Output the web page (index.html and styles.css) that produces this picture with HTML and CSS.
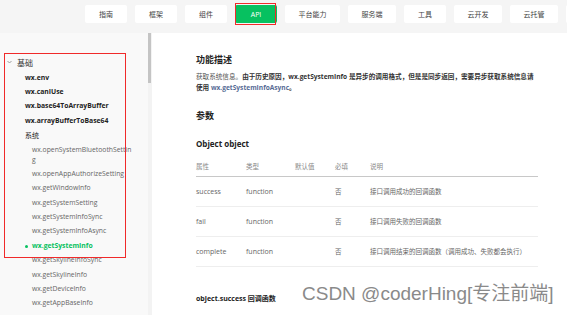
FILE: index.html
```html
<!DOCTYPE html>
<html lang="zh-CN">
<head>
<meta charset="utf-8">
<link rel="stylesheet" href="styles.css">
</head>
<body>
<header class="topbar">
  <nav class="tabs">
    <a class="tab">指南</a>
    <a class="tab">框架</a>
    <a class="tab">组件</a>
    <a class="tab tab-active">API</a>
    <a class="tab">平台能力</a>
    <a class="tab">服务端</a>
    <a class="tab">工具</a>
    <a class="tab">云开发</a>
    <a class="tab">云托管</a>
    <span class="tab tab-more"></span>
  </nav>
</header>
<div class="page">
  <aside class="sidebar">
    <div class="nav">
      <div class="group"><svg class="chev" width="5" height="4" viewBox="0 0 5 4"><polyline points="0.5,1 2.5,3 4.5,1" fill="none" stroke="#888" stroke-width="0.8"/></svg>基础</div>
      <a class="item strong">wx.env</a>
      <a class="item strong">wx.canIUse</a>
      <a class="item strong">wx.base64ToArrayBuffer</a>
      <a class="item strong">wx.arrayBufferToBase64</a>
      <div class="item strong sub-title">系统</div>
      <a class="item leaf">wx.openSystemBluetoothSetting</a>
      <a class="item leaf">wx.openAppAuthorizeSetting</a>
      <a class="item leaf">wx.getWindowInfo</a>
      <a class="item leaf">wx.getSystemSetting</a>
      <a class="item leaf">wx.getSystemInfoSync</a>
      <a class="item leaf">wx.getSystemInfoAsync</a>
      <a class="item leaf active">wx.getSystemInfo</a>
      <a class="item leaf">wx.getSkylineInfoSync</a>
      <a class="item leaf">wx.getSkylineInfo</a>
      <a class="item leaf">wx.getDeviceInfo</a>
      <a class="item leaf">wx.getAppBaseInfo</a>
    </div>
    <div class="highlight"></div>
  </aside>
  <div class="scrolltrack"><div class="thumb"></div></div>
  <main class="content">
    <h3 class="h-section">功能描述</h3>
    <p class="desc">获取系统信息。<b>由于历史原因，wx.getSystemInfo 是异步的调用格式，但是是同步返回，需要异步获取系统信息请使用 <a class="link">wx.getSystemInfoAsync</a>。</b></p>
    <h3 class="h-section h-params">参数</h3>
    <h4 class="h-obj">Object object</h4>
    <table class="params">
      <colgroup><col class="c1"><col class="c2"><col class="c3"><col class="c4"><col></colgroup>
      <thead>
        <tr><th>属性</th><th>类型</th><th>默认值</th><th>必填</th><th>说明</th></tr>
      </thead>
      <tbody>
        <tr><td>success</td><td>function</td><td></td><td>否</td><td>接口调用成功的回调函数</td></tr>
        <tr><td>fail</td><td>function</td><td></td><td>否</td><td>接口调用失败的回调函数</td></tr>
        <tr><td>complete</td><td>function</td><td></td><td>否</td><td>接口调用结束的回调函数（调用成功、失败都会执行）</td></tr>
      </tbody>
    </table>
    <h4 class="h-cb">object.success 回调函数</h4>
    <div class="watermark">CSDN @coderHing[专注前端]</div>
  </main>
</div>
</body>
</html>
```

FILE: styles.css
```css
* { box-sizing: border-box; }
html, body {
  margin: 0;
  padding: 0;
  width: 567px;
  height: 315px;
  overflow: hidden;
  background: #fff;
  font-family: "Open Sans", "Noto Sans CJK SC", sans-serif;
  color: #333;
}
a { text-decoration: none; color: inherit; }

.topbar {
  height: 33px;
  background: #f5f5f5;
  padding: 5px 0 0 85px;
  overflow: hidden;
}
.tabs {
  display: flex;
  gap: 8px;
}
.tab {
  position: relative;
  flex: none;
  display: flex;
  align-items: center;
  justify-content: center;
  min-width: 42px;
  height: 18px;
  padding: 0 13.5px;
  background: #fff;
  border-radius: 2px;
  font-size: 7px;
  color: #444;
  font-family: "Noto Sans CJK SC", sans-serif;
  white-space: nowrap;
}
.tab-active {
  background: #07c160;
  color: #fff;
  font-family: "Open Sans", sans-serif;
}
.tab-active::after {
  content: "";
  position: absolute;
  left: 0;
  right: 1px;
  top: -2px;
  bottom: -2px;
  border: 1.5px solid #f02a2a;
}

.page {
  display: flex;
  height: 282px;
}
.sidebar {
  position: relative;
  width: 148px;
  background: #f9f9f9;
  padding-top: 20.5px;
}
.nav {
  width: 133px;
  font-size: 6.8px;
}
.group {
  display: flex;
  align-items: center;
  height: 17px;
  padding-left: 7px;
  font-size: 8px;
  color: #333;
  font-family: "Noto Sans CJK SC", sans-serif;
}
.chev { margin-right: 5px; }
.item {
  display: block;
  line-height: 10px;
  padding: 2.2px 0;
  word-break: break-all;
}
.strong {
  padding-left: 25px;
  font-weight: 700;
  color: #222;
}
.sub-title {
  font-weight: 400;
  font-family: "Noto Sans CJK SC", sans-serif;
  font-size: 7px;
}
.leaf {
  padding-left: 32px;
  color: #666;
}
.active {
  position: relative;
  color: #07c160;
  font-weight: 700;
}
.active::before {
  content: "";
  position: absolute;
  left: 25px;
  top: 6px;
  width: 3px;
  height: 3px;
  border-radius: 50%;
  background: #07c160;
}
.highlight {
  position: absolute;
  left: 4px;
  top: 20px;
  width: 122px;
  height: 205px;
  border: 1.5px solid #f02a2a;
  pointer-events: none;
}

.scrolltrack {
  width: 4px;
  background: #f3f3f3;
}
.thumb {
  width: 3px;
  height: 50px;
  background: #c4c4c4;
}

.content {
  flex: 1;
  padding: 21px 29px 0 44px;
  position: relative;
}
.h-section {
  margin: 0;
  font-size: 9px;
  line-height: 12px;
  font-weight: 700;
  color: #222;
  font-family: "Noto Sans CJK SC", sans-serif;
}
.desc {
  margin: 4.5px 0 0;
  font-size: 6.6px;
  line-height: 11px;
  color: #555;
}
.desc b { font-weight: 700; color: #333; }
.link { color: #576b95; }
.h-params { margin-top: 17.5px; }
.h-obj {
  margin: 15.5px 0 0;
  font-size: 8px;
  line-height: 11px;
  font-weight: 700;
  color: #222;
}
.params {
  margin-top: 7.5px;
  width: 342px;
  border-collapse: collapse;
  table-layout: fixed;
  font-size: 7px;
}
.c1 { width: 50px; }
.c2 { width: 49px; }
.c3 { width: 40px; }
.c4 { width: 35px; }
.params th {
  height: 20px;
  padding: 0;
  text-align: left;
  font-weight: 400;
  color: #888;
  border-bottom: 1px solid #c8c8c8;
  font-family: "Noto Sans CJK SC", sans-serif;
  font-size: 6.5px;
}
.params td {
  height: 30px;
  padding: 0;
  color: #666;
  border-bottom: 1px solid #eee;
  white-space: nowrap;
}
.params td:nth-child(4),
.params td:nth-child(5) {
  font-family: "Noto Sans CJK SC", sans-serif;
  font-size: 6.5px;
}
.h-cb {
  margin: 26.5px 0 0;
  font-size: 7px;
  line-height: 11px;
  font-weight: 700;
  color: #222;
}
.watermark {
  position: absolute;
  left: 150px;
  top: 249px;
  font-family: "Liberation Sans", "Noto Sans CJK SC", sans-serif;
  font-size: 19px;
  line-height: 24px;
  color: #8a8a8a;
  white-space: nowrap;
  text-shadow: 0 0 2px #fff;
}
```
